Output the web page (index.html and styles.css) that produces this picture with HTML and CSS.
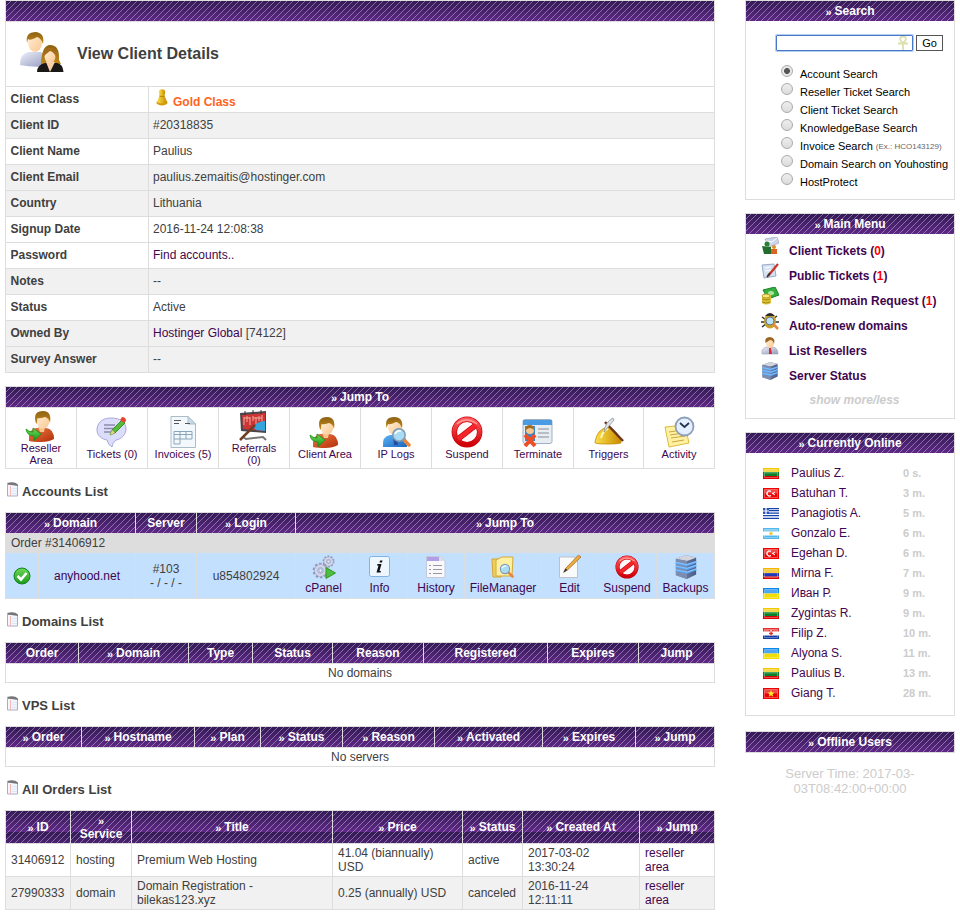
FILE: index.html
```html
<!DOCTYPE html>
<html lang="en">
<head>
<meta charset="utf-8">
<title>View Client Details</title>
<link rel="stylesheet" href="styles.css">
</head>
<body>
<svg class="sprite" width="0" height="0" aria-hidden="true">
  <defs>
    <linearGradient id="gOrange" x1="0" y1="0" x2="1" y2="1"><stop offset="0" stop-color="#ef7a45"/><stop offset="1" stop-color="#b22f08"/></linearGradient>
    <linearGradient id="gBlue" x1="0" y1="0" x2="1" y2="1"><stop offset="0" stop-color="#5fb4f5"/><stop offset="1" stop-color="#1766c0"/></linearGradient>
    <linearGradient id="gHair" x1="0" y1="0" x2="0" y2="1"><stop offset="0" stop-color="#8d6214"/><stop offset="1" stop-color="#c48a18"/></linearGradient>
    <linearGradient id="gSkin" x1="0" y1="0" x2="1" y2="1"><stop offset="0" stop-color="#fff0d8"/><stop offset="1" stop-color="#f9c791"/></linearGradient>
    <linearGradient id="gGreen" x1="0" y1="0" x2="0" y2="1"><stop offset="0" stop-color="#6fd858"/><stop offset="1" stop-color="#1a9a1c"/></linearGradient>
    <linearGradient id="gShirt" x1="0" y1="0" x2="1" y2="1"><stop offset="0" stop-color="#eef0fa"/><stop offset="1" stop-color="#9299bd"/></linearGradient>
    <linearGradient id="gGold" x1="0" y1="0" x2="1" y2="0"><stop offset="0" stop-color="#fbe14d"/><stop offset="1" stop-color="#c88a00"/></linearGradient>
    <linearGradient id="gRed" x1="0" y1="0" x2="0" y2="1"><stop offset="0" stop-color="#ff5a5a"/><stop offset="1" stop-color="#cf0007"/></linearGradient>
    <linearGradient id="gServer" x1="0" y1="0" x2="1" y2="0"><stop offset="0" stop-color="#8292b5"/><stop offset="1" stop-color="#4a5c85"/></linearGradient>
  </defs>
  <symbol id="person" viewBox="0 0 32 32">
    <path d="M4 31Q3 19 11 18L21 18Q29 19 29 29Q24 32 16 32Q8 32 4 31Z" fill="url(#gOrange)"/>
    <path d="M13 17h7l-1 5h-4Z" fill="#f7c58c"/>
    <ellipse cx="18" cy="11" rx="6.3" ry="7.800" fill="url(#gSkin)"/>
    <path d="M10.500 12Q8 1 18 1Q27 1 25 13Q24 8 20 7Q14 9 12.500 8Q12 10 12 14Z" fill="url(#gHair)"/>
  </symbol>
  <symbol id="person-arrow" viewBox="0 0 32 32">
    <use href="#person"/>
    <path d="M1 19Q4 22 8 22L8 18L16 24L9 30.500V26Q2 26 1 19Z" fill="url(#gGreen)" stroke="#169018" stroke-width=".8"/>
  </symbol>
  <symbol id="ban" viewBox="0 0 32 32">
    <circle cx="16" cy="16" r="12.700" fill="#fff8f8" stroke="#c8000a" stroke-width="5.400"/>
    <path d="M7 23L25 9" stroke="#c8000a" stroke-width="5.600"/>
    <circle cx="16" cy="16" r="12.700" fill="none" stroke="url(#gRed)" stroke-width="4.200"/>
    <path d="M7 23L25 9" stroke="#f5252b" stroke-width="4.400"/>
    <path d="M6 8Q15 0 26 8" fill="none" stroke="#ff9a9a" stroke-width="1.500"/>
  </symbol>
  <symbol id="server" viewBox="0 0 24 26">
    <path d="M1 4L12 0L23 3V21L13 26L1 22Z" fill="url(#gServer)"/>
    <path d="M1 4L12 0L23 3L13 6.500Z" fill="#d3d5dc"/>
    <path d="M1 4L13 6.500V26L1 22Z" fill="#7d8db0"/>
    <path d="M1 8.500L13 11L23 7.500M1 12.500L13 15L23 11.500M1 16.500L13 19L23 15.500" fill="none" stroke="#58a7fa" stroke-width="2.400"/>
    <path d="M1 8L13 10.500L23 7M1 12L13 14.500L23 11M1 16L13 18.500L23 15" fill="none" stroke="#a8d2ff" stroke-width=".7"/>
  </symbol>
  <symbol id="note" viewBox="0 0 11 15">
    <path d="M.5 2.500H10.500V14H.5Z" fill="#f2f6ff" stroke="#a9adc2"/>
    <path d="M0 1Q5-.5 9 1L11 3V4L1 2.500Z" fill="#777"/>
    <path d="M3.500 4V14" stroke="#f6b8b0"/><path d="M5 6.500H10M5 9H10M5 11.500H10" stroke="#dde5f6"/>
  </symbol>
  <symbol id="lens" viewBox="0 0 20 20">
    <path d="M12 12L18 18" stroke="#e8863a" stroke-width="3.500" stroke-linecap="round"/>
    <circle cx="8" cy="8" r="6.200" fill="#a9dcf4" stroke="#7d9cb5" stroke-width="1.500"/>
    <path d="M4 7Q6 3 10 4" fill="none" stroke="#fff" stroke-width="1.500"/>
  </symbol>
  <symbol id="gear" viewBox="0 0 20 20">
    <circle cx="10" cy="10" r="7.500" fill="none" stroke="#9397b8" stroke-width="3.500" stroke-dasharray="2.700 2"/>
    <circle cx="10" cy="10" r="5.200" fill="none" stroke="#a4a8c6" stroke-width="4.500"/>
    <circle cx="10" cy="10" r="5.200" fill="none" stroke="#d3d6e8" stroke-width="3"/>
    <circle cx="10" cy="10" r="2" fill="#edf3ff" stroke="#8388aa" stroke-width=".8"/>
  </symbol>
  <symbol id="shine" viewBox="0 0 16 11"><path d="M1.500 5.500V1.500H14.500V5.500Z" fill="#fff" opacity=".28"/><path d="M1.500 9.500V1.500H14.500V9.500Z" fill="none" stroke="#fff" opacity=".3"/></symbol>
  <symbol id="f-lt" viewBox="0 0 16 11"><path d="M0 0H16V4H0Z" fill="#f2c900"/><path d="M0 4H16V8H0Z" fill="#08812a"/><path d="M0 8H16V11H0Z" fill="#d80000"/><use href="#shine"/></symbol>
  <symbol id="f-tr" viewBox="0 0 16 11"><path d="M0 0H16V11H0Z" fill="#ee0000"/><use href="#shine"/><path d="M8 3.500A2.500 2.500 0 1 0 8 7.500" fill="none" stroke="#fff" stroke-width="1.300"/><path d="M9 5.500L12 4L10.500 5.500L12 7Z" fill="#fff" stroke="#fff" stroke-width=".6"/></symbol>
  <symbol id="f-gr" viewBox="0 0 16 11"><path d="M0 0H16V11H0Z" fill="#fff"/><path d="M0 .5H16M0 2.700H16M0 5.100H16M0 7.600H16M0 10.300H16" stroke="#1642ac" stroke-width="1.300"/><path d="M0 0H6V6H0Z" fill="#2852bc"/><path d="M3 0V6M0 3H6" stroke="#fff" stroke-width="1.200"/></symbol>
  <symbol id="f-ar" viewBox="0 0 16 11"><path d="M0 0H16V11H0Z" fill="#52b8ec"/><path d="M0 3.500H16V7.500H0Z" fill="#fff"/><use href="#shine"/><circle cx="8" cy="5.500" r="1.800" fill="#f2cd3c"/></symbol>
  <symbol id="f-co" viewBox="0 0 16 11"><path d="M0 0H16V5H0Z" fill="#f2b600"/><path d="M0 5H16V8.500H0Z" fill="#2036b4"/><path d="M0 8.500H16V11H0Z" fill="#d80000"/><use href="#shine"/></symbol>
  <symbol id="f-ua" viewBox="0 0 16 11"><path d="M0 0H16V5.500H0Z" fill="#0a86ea"/><path d="M0 5.500H16V11H0Z" fill="#f3dc00"/><use href="#shine"/></symbol>
  <symbol id="f-hr" viewBox="0 0 16 11"><path d="M0 0H16V11H0Z" fill="#fff"/><path d="M0 0H16V3.500H0Z" fill="#e82a2a"/><path d="M0 7.500H16V11H0Z" fill="#1840a4"/><use href="#shine"/><path d="M6 2H10V7L8 8L6 7Z" fill="#fff"/><path d="M6 2h1.400v1.400h1.400V2H10v1.400H8.800v1.400H10v1.400H8.800v1.500H7.400V6.200H6V4.800h1.400V3.400H6Z" fill="#e63030"/></symbol>
  <symbol id="f-vn" viewBox="0 0 16 11"><path d="M0 0H16V11H0Z" fill="#ec0000"/><use href="#shine"/><path d="M8 2L9 4.600H11.500L9.500 6.200L10.200 8.700L8 7.200L5.800 8.700L6.500 6.200L4.500 4.600H7Z" fill="#ffef2c"/></symbol>
</svg>

<div class="page">
  <main class="main">
    <section class="grid details">
      <div class="bar wide"></div>
      <div class="title wide">
        <svg width="44" height="42" viewBox="0 0 44 42">
          <path d="M0 33Q0 21 9 20H20Q28 21 28 34Q14 36 0 33Z" fill="url(#gShirt)"/>
          <ellipse cx="15" cy="11" rx="7" ry="9" fill="url(#gSkin)"/>
          <path d="M7 11Q5 0 16 0Q25 1 23 12Q21 6 17 5Q10 9 8 7Z" fill="url(#gHair)"/>
          <path d="M21 31Q22 13 30 13Q40 13 39 28L41 32L21 33Z" fill="url(#gHair)"/>
          <path d="M17 40Q17 33 25 31H37Q43 32 43.500 40Z" fill="#1a1717"/>
          <path d="M26 30H35L30 40Z" fill="#f8d2a6"/><ellipse cx="30" cy="24" rx="5.500" ry="7.500" fill="url(#gSkin)"/>
          <path d="M24 24Q24 16 30 16Q36 17 36 25Q34 20 30 19Q26 22 24 24Z" fill="#a56a17"/>
        </svg>
        <h1>View Client Details</h1>
      </div>
      <b>Client Class</b><div class="gold"><svg width="12" height="17" viewBox="0 0 12 17"><ellipse cx="6" cy="13.500" rx="5.500" ry="3" fill="#d19c08"/><path d="M4 5H8L11 13Q6 16 1 13Z" fill="url(#gGold)"/><circle cx="6" cy="3.500" r="3.200" fill="url(#gGold)"/><path d="M3.500 7Q6 8.500 8.500 7" stroke="#b88300" fill="none"/></svg><strong>Gold Class</strong></div>
      <b class="alt">Client ID</b><div class="alt">#20318835</div>
      <b>Client Name</b><div>Paulius</div>
      <b class="alt">Client Email</b><div class="alt">paulius.zemaitis@hostinger.com</div>
      <b class="alt">Country</b><div class="alt">Lithuania</div>
      <b>Signup Date</b><div>2016-11-24 12:08:38</div>
      <b>Password</b><div><a>Find accounts..</a></div>
      <b class="alt">Notes</b><div class="alt">--</div>
      <b>Status</b><div>Active</div>
      <b class="alt">Owned By</b><div class="alt"><a>Hostinger Global</a> [74122]</div>
      <b class="alt">Survey Answer</b><div class="alt">--</div>
    </section>

    <section class="grid jump">
      <div class="bar wide"><span>»</span> Jump To</div>
      <a><svg width="32" height="32"><use href="#person-arrow"/></svg>Reseller Area</a>
      <a><svg width="32" height="32" viewBox="0 0 32 32"><path d="M15 2C5 2 1 8 1 14C1 20 6 23 11 24Q12 29 16 31Q16 27 20 24C26 23 30 18 30 13C30 6 24 2 15 2Z" fill="#dcdcfb" stroke="#a9a8de"/><path d="M8 9H19M8 12.500H18M8 16H20" stroke="#8c8cab" stroke-width="1.500"/><path d="M14 19L16 14L26 4L29 7L19 17Z" fill="#57ba38" stroke="#268118" stroke-width=".8"/><path d="M24 4L26 1Q30 1 30 5L28 7Z" fill="#e84430"/><path d="M14 19L16 14L19 17Z" fill="#f1cd8c"/></svg>Tickets (0)</a>
      <a><svg width="32" height="32" viewBox="0 0 32 32"><path d="M4 .5H21L28.500 8V31.500H4Z" fill="#f2f8fc" stroke="#a8bdc8"/><path d="M21 .5V8H28.500Z" fill="#c8dce8" stroke="#a8bdc8"/><path d="M7 4.500H14M7 7.500H12M18 7.500H23" stroke="#555"/><path d="M7 15.500H25V23H7ZM7 18.500H25M13 15V28M19 15V23M7 23V28H13" fill="none" stroke="#8aa6bb"/></svg>Invoices (5)</a>
      <a><svg width="32" height="32" viewBox="0 0 32 32"><path d="M5 27L8 29L25 27L28 30" fill="none" stroke="#777" stroke-width="2"/><path d="M2 3L28 1V23L3 21Z" fill="#49474d"/><path d="M4 5L27 3V21L5 19Z" fill="#cc3533"/><path d="M6 7V15M9 6V12M12 7V15M15 6V11M18 7V14M21 6V11M24 5V12M6 8H12M15 8H24" stroke="#f0aaa0"/><path d="M15 17Q18 12 27 11V21L18 20Z" fill="#34a5dd"/><path d="M2 30L17 15" stroke="#713e24" stroke-width="2.500"/><path d="M7 1V5M15 0V4M23 0V4" stroke="#333"/></svg>Referrals (0)</a>
      <a><svg width="32" height="32"><use href="#person-arrow"/></svg>Client Area</a>
      <a><svg width="32" height="32" viewBox="0 0 32 32"><path d="M3 31Q2 20 10 19H21Q27 20 27 31Z" fill="url(#gBlue)"/><ellipse cx="14.500" cy="11" rx="6.500" ry="8" fill="url(#gSkin)"/><path d="M6.500 12Q4 1 14 1Q24 1 22 13Q20 6 16 6Q10 9 8 8Z" fill="url(#gHair)"/><path d="M13 20H17L18 29H14Z" fill="#2b4a9b"/><use href="#lens" x="11" y="11" width="20" height="20"/></svg>IP Logs</a>
      <a><svg width="32" height="32"><use href="#ban"/></svg>Suspend</a>
      <a><svg width="32" height="32" viewBox="0 0 32 32"><rect x="1" y="3.500" width="29" height="24" rx="2" fill="#e8edf2" stroke="#9eb1c5"/><path d="M1 4H30V9H1Z" fill="#499ce3"/><path d="M3 10H13V25H3Z" fill="#3d86c8"/><circle cx="8" cy="14" r="4" fill="#f8c78f"/><path d="M4 14Q3 9 8 9Q12 9 12 14Q8 10 4 14Z" fill="#a26c1e"/><path d="M16 13H27M16 17H27M16 21H27" stroke="#858e99"/><path d="M3 19L13 30M13 19L3 30" stroke="#ef4e26" stroke-width="4"/></svg>Terminate</a>
      <a><svg width="32" height="32" viewBox="0 0 32 32"><path d="M2 26Q4 13 15 11Q25 14 28 26Q30 28 15 28Q0 28 2 26Z" fill="url(#gGold)" stroke="#c58a00" stroke-width=".8"/><path d="M8 22Q10 14 15 13" stroke="#fff8b5" stroke-width="2" fill="none"/><path d="M12 6L30 25" stroke="#6d351d" stroke-width="2.500"/><path d="M11 16Q12 6 20 2L21 4L16 10Z" fill="#dce1e5" stroke="#858b91" stroke-width=".7"/></svg>Triggers</a>
      <a><svg width="32" height="32" viewBox="0 0 32 32"><path d="M2 11L22 9L26 27L6 31Z" fill="#fff0a2" stroke="#dbbd40"/><path d="M6 16L19 14M7 19L21 17M8 22L22 20M9 26L21 24" stroke="#c7a842"/><circle cx="21.500" cy="10.500" r="9" fill="#e4efff" stroke="#8d9fb8" stroke-width="1.800"/><path d="M17 7L21.500 11L26 7" fill="none" stroke="#25364e" stroke-width="1.800"/></svg>Activity</a>
    </section>

    <h2><svg width="11" height="15"><use href="#note"/></svg>Accounts List</h2>
    <section class="grid accounts">
      <div class="bar two"><span>»</span> Domain</div><div class="bar">Server</div><div class="bar"><span>»</span> Login</div><div class="bar seven"><span>»</span> Jump To</div>
      <div class="order wide">Order #31406912</div>
      <div><svg width="18" height="18" viewBox="0 0 18 18"><circle cx="9" cy="9" r="8" fill="url(#gGreen)" stroke="#118518"/><path d="M4.500 9L8 12.500L13.500 6" fill="none" stroke="#fff" stroke-width="2.600"/></svg></div>
      <div><a>anyhood.net</a></div>
      <div>#103<br>- / - / -</div>
      <div>u854802924</div>
      <a><svg width="24" height="24" viewBox="0 0 24 24"><use href="#gear" x="10" y="0" width="13" height="13"/><use href="#gear" x="0" y="7" width="17" height="17"/><path d="M14 12.500L23.500 18L14 23.500Z" fill="#51bd3e" stroke="#2b9a24"/></svg>cPanel</a>
      <a><svg width="24" height="24" viewBox="0 0 24 24"><rect x="1.500" y="1.500" width="20" height="20" rx="2" fill="#eef7ff" stroke="#80b3df"/><path d="M12 5.500H14.500L14 7.500H11.500ZM9.500 9H13.500L11.500 16H13L12.500 17.500H8.500L10.500 10.500H9Z" fill="#111"/></svg>Info</a>
      <a><svg width="24" height="24" viewBox="0 0 24 24"><path d="M2.500 1.500H16L21 6V22.500H2.500Z" fill="#f8f8fd" stroke="#c5c8d9"/><path d="M3 2H15V6H3Z" fill="#b29de9"/><path d="M15 1.500V6H21Z" fill="#ddd"/><path d="M5 10.500H7M9 10.500H18M5 14.500H7M9 14.500H18M5 18.500H7M9 18.500H18" stroke="#999"/></svg>History</a>
      <a><svg width="24" height="24" viewBox="0 0 24 24"><path d="M1 4H8L10 7V22H2Z" fill="#f0cf59" stroke="#d0a735"/><path d="M5 5L11 2H22L21 21H5Z" fill="#fff0a4" stroke="#d2aa3b"/><use href="#lens" x="8" y="8" width="15" height="15"/></svg>FileManager</a>
      <a><svg width="24" height="24" viewBox="0 0 24 24"><path d="M1.500 2H16L19.500 6V22.500H1.500Z" fill="#fafafa" stroke="#bdc1c7"/><path d="M6 17L7.500 13.500L20.500 0L23 2L9.500 15Z" fill="#efac3a" stroke="#995f21" stroke-width=".7"/><path d="M5 18L7.500 13.500L9.500 15Z" fill="#333"/></svg>Edit</a>
      <a><svg width="24" height="24"><use href="#ban"/></svg>Suspend</a>
      <a><svg width="24" height="24"><use href="#server"/></svg>Backups</a>
    </section>

    <h2><svg width="11" height="15"><use href="#note"/></svg>Domains List</h2>
    <section class="grid domains">
      <div class="bar">Order</div><div class="bar"><span>»</span> Domain</div><div class="bar">Type</div><div class="bar">Status</div><div class="bar">Reason</div><div class="bar">Registered</div><div class="bar">Expires</div><div class="bar">Jump</div>
      <div class="empty wide">No domains</div>
    </section>

    <h2><svg width="11" height="15"><use href="#note"/></svg>VPS List</h2>
    <section class="grid vps">
      <div class="bar"><span>»</span> Order</div><div class="bar"><span>»</span> Hostname</div><div class="bar"><span>»</span> Plan</div><div class="bar"><span>»</span> Status</div><div class="bar"><span>»</span> Reason</div><div class="bar"><span>»</span> Activated</div><div class="bar"><span>»</span> Expires</div><div class="bar"><span>»</span> Jump</div>
      <div class="empty wide">No servers</div>
    </section>

    <h2><svg width="11" height="15"><use href="#note"/></svg>All Orders List</h2>
    <section class="grid orders">
      <div class="bar"><span>»</span> ID</div><div class="bar stack"><span>»</span>Service</div><div class="bar"><span>»</span> Title</div><div class="bar"><span>»</span> Price</div><div class="bar"><span>»</span> Status</div><div class="bar"><span>»</span> Created At</div><div class="bar"><span>»</span> Jump</div>
      <div>31406912</div><div>hosting</div><div>Premium Web Hosting</div><div>41.04 (biannually)<br>USD</div><div>active</div><div>2017-03-02<br>13:30:24</div><div><a>reseller<br>area</a></div>
      <div class="alt">27990333</div><div class="alt">domain</div><div class="alt">Domain Registration -<br>bilekas123.xyz</div><div class="alt">0.25 (annually) USD</div><div class="alt">canceled</div><div class="alt">2016-11-24<br>12:11:11</div><div class="alt"><a>reseller<br>area</a></div>
    </section>
  </main>

  <aside class="side">
    <section class="box search">
      <div class="bar"><span>»</span> Search</div>
      <form>
        <div class="field"><svg width="12" height="14" viewBox="0 0 12 14"><path d="M6 7Q2 4 3.500 1.500Q6-.5 8.500 1.500Q10 4 6 7V14M1 7.500H11" fill="none" stroke="#dce0ac" stroke-width="1.800"/></svg></div>
        <button type="button">Go</button>
      </form>
      <ul>
        <li class="on"><i></i>Account Search</li>
        <li><i></i>Reseller Ticket Search</li>
        <li><i></i>Client Ticket Search</li>
        <li><i></i>KnowledgeBase Search</li>
        <li><i></i>Invoice Search <small>(Ex.: HCO143129)</small></li>
        <li><i></i>Domain Search on Youhosting</li>
        <li><i></i>HostProtect</li>
      </ul>
    </section>

    <section class="box menu">
      <div class="bar"><span>»</span> Main Menu</div>
      <ul>
        <li><svg width="18" height="18" viewBox="0 0 18 18"><path d="M4 2L16 0L18 6L8 10Z" fill="#cdd5ed" stroke="#929ab8" stroke-width=".6"/><path d="M5 4L11 5L16 1" fill="none" stroke="#fff"/><circle cx="6" cy="7" r="2.500" fill="#2b7c36"/><path d="M1 9L10 10V17H3Z" fill="#226d2c"/><circle cx="13" cy="10" r="2" fill="#db8f28"/><path d="M10 12H16V17H10Z" fill="#db6425"/></svg><a>Client Tickets (<em>0</em>)</a></li>
        <li><svg width="18" height="18" viewBox="0 0 18 18"><path d="M1 3L13 2L15 14L3 16Z" fill="#d5e2f3" stroke="#96abc5"/><path d="M4 6L10 5M4 9L10 8" stroke="#fff"/><path d="M7 14L17 2" stroke="#c73728" stroke-width="2.200"/><path d="M6 15L9 11" stroke="#333" stroke-width="1.500"/></svg><a>Public Tickets (<em>1</em>)</a></li>
        <li><svg width="18" height="18" viewBox="0 0 18 18"><path d="M2 3L14 0L18 8L7 12Z" fill="#37af3b" stroke="#16842c"/><ellipse cx="10" cy="6" rx="3" ry="2" fill="#a8e69e"/><path d="M1 8H10V16Q5 19 1 16Z" fill="#dac034"/><ellipse cx="5" cy="9" rx="4" ry="2" fill="#f5e782" stroke="#b99a1d"/><path d="M1 12Q5 14 9 12M1 15Q5 17 9 15" fill="none" stroke="#a88c20"/></svg><a>Sales/Domain Request (<em>1</em>)</a></li>
        <li><svg width="18" height="18" viewBox="0 0 18 18"><path d="M1 5L16 15M1 15L16 4M0 10H18" stroke="#303330" stroke-width="1.500"/><ellipse cx="9" cy="9" rx="6" ry="7.500" fill="#c9a029"/><path d="M4 4Q9-2 14 4Z" fill="#292b28"/><circle cx="9" cy="9" r="4" fill="#bbe3f5" stroke="#667684"/><path d="M12 12L17 17" stroke="#e58b3d" stroke-width="2.500"/></svg><a>Auto-renew domains</a></li>
        <li><svg width="18" height="18" viewBox="0 0 18 18"><path d="M1 17Q0 11 6 10H12Q17 11 17 17Z" fill="url(#gShirt)" stroke="#9da1af" stroke-width=".6"/><ellipse cx="9" cy="6" rx="4" ry="5" fill="url(#gSkin)"/><path d="M4.500 6Q3 0 9 0Q15 1 13 7Q12 3 9 3Q6 5 4.500 6Z" fill="#9b6523"/><path d="M8 11H10L11 17H8Z" fill="#d42f37"/></svg><a>List Resellers</a></li>
        <li><svg width="18" height="18"><use href="#server"/></svg><a>Server Status</a></li>
      </ul>
      <p>show more/less</p>
    </section>

    <section class="box online">
      <div class="bar"><span>»</span> Currently Online</div>
      <ul>
        <li><svg><use href="#f-lt"/></svg><a>Paulius Z.</a><b>0 s.</b></li>
        <li><svg><use href="#f-tr"/></svg><a>Batuhan T.</a><b>3 m.</b></li>
        <li><svg><use href="#f-gr"/></svg><a>Panagiotis A.</a><b>5 m.</b></li>
        <li><svg><use href="#f-ar"/></svg><a>Gonzalo E.</a><b>6 m.</b></li>
        <li><svg><use href="#f-tr"/></svg><a>Egehan D.</a><b>6 m.</b></li>
        <li><svg><use href="#f-co"/></svg><a>Mirna F.</a><b>7 m.</b></li>
        <li><svg><use href="#f-ua"/></svg><a>Иван Р.</a><b>9 m.</b></li>
        <li><svg><use href="#f-lt"/></svg><a>Zygintas R.</a><b>9 m.</b></li>
        <li><svg><use href="#f-hr"/></svg><a>Filip Z.</a><b>10 m.</b></li>
        <li><svg><use href="#f-ua"/></svg><a>Alyona S.</a><b>11 m.</b></li>
        <li><svg><use href="#f-lt"/></svg><a>Paulius B.</a><b>13 m.</b></li>
        <li><svg><use href="#f-vn"/></svg><a>Giang T.</a><b>28 m.</b></li>
      </ul>
    </section>

    <section class="box offline"><div class="bar"><span>»</span> Offline Users</div></section>
    <p class="time">Server Time: 2017-03-<br>03T08:42:00+00:00</p>
  </aside>
</div>
</body>
</html>
```

FILE: styles.css
```css
* { box-sizing: border-box; }
body { margin: 0; background: #fff; color: #404040; font: 12px/14px "Liberation Sans", Arial, sans-serif; }
h1, h2, p, ul { margin: 0; padding: 0; }
ul { list-style: none; }
a { color: #3f0650; }
.sprite { display: block; }
.page { display: flex; gap: 30px; padding-left: 5px; height: 912px; overflow: hidden; }
.main { width: 710px; flex: none; }
.side { width: 210px; flex: none; }

.bar {
  height: 20px;
  display: flex; align-items: center; justify-content: center; gap: 3px;
  color: #fff; font-weight: bold; text-align: center;
  background:
    repeating-linear-gradient(135deg, rgba(255,255,255,0) 0 3.3px, rgba(255,255,255,.36) 3.3px 4.24px),
    linear-gradient(#341a57, #5f2987) 0 0 / 100% 21px;
}
.bar span { font-size: 11px; line-height: 12px; padding-top: 1px; }

.grid { display: grid; gap: 1px; background: #ddd; border: 1px solid #ddd; }
.grid > * { background-color: #fff; }
.grid > .alt { background-color: #f1f1f1; }
.wide { grid-column: 1 / -1; }

.details { grid-template-columns: 142px 1fr; grid-template-rows: 20px 64px repeat(11, 25px); }
.details > b, .details > div { padding: 5px 4px 0; }
.details > b { padding-left: 4.5px; }
.details > .title { display: flex; align-items: center; gap: 13px; padding: 0 0 0 14px; }
.title svg { margin-top: -2px; }
h1 { font-size: 16px; line-height: 20px; }
.details > .gold { display: flex; gap: 5px; padding: 2px 0 0 7px; color: #ff641c; }
.gold strong { padding-top: 6px; }

.jump { margin-top: 13px; grid-template-columns: repeat(8, 70px) 69px 70px; grid-template-rows: 20px 60px; }
.jump > a { display: flex; flex-direction: column; align-items: center; justify-content: center; font-size: 11px; line-height: 12px; text-align: center; padding: 0 8px; white-space: nowrap; }
.jump > a:nth-child(2), .jump > a:nth-child(5) { white-space: normal; padding: 0 12px; }

h2 { display: flex; gap: 4px; margin: 13px 0 13px 2px; height: 17px; font-size: 13px; line-height: 20px; }

.accounts { grid-template-columns: 32px 96px 60px 98px 55px 55px 56px 76px 55px 58px 57px; grid-template-rows: 20px 18px 45px; }
.two { grid-column: span 2; }
.seven { grid-column: span 7; }
.accounts > :not(.bar):not(.order) { background: #c4e0ff; display: flex; flex-direction: column; align-items: center; justify-content: center; text-align: center; }
.accounts > a > svg { margin: -1px 0 2px; }
.accounts > .order { background: #ddd; padding: 2px 5px; }

.empty { text-align: center; line-height: 18px; }
.domains, .vps { grid-template-rows: 20px 18px; }
.domains { grid-template-columns: 72px 109px 63px 79px 90px 123px 90px 1fr; }
.vps { grid-template-columns: 75px 112px 65px 81px 91px 107px 92px 1fr; }
.orders { grid-template-columns: 64px 60px 200px 129px 59px 116px 1fr; grid-template-rows: repeat(3, 32px); }
.orders > .bar { height: 32px; }
.orders > .stack { flex-direction: column; gap: 0; line-height: 14px; padding-top: 1px; }
.orders > :not(.bar) { display: flex; align-items: center; padding-left: 5px; }

.box { border: 1px solid #ddd; }
.search { height: 200px; }
.search form { display: flex; gap: 3px; padding: 14px 0 0 30px; }
.field { width: 137px; height: 16px; border: 1px solid #4878c8; border-radius: 1px; box-shadow: 0 0 0 1px #b4cdf2; display: flex; justify-content: flex-end; align-items: center; padding-right: 3px; }
.search button { width: 27px; height: 16px; padding: 0; border: 1px solid #555; background: #fff; font: 11px/12px "Liberation Sans", Arial, sans-serif; color: #000; }
.search ul { padding: 13px 0 0 35px; color: #000; font-size: 11px; }
.search li { display: flex; height: 18px; gap: 7px; line-height: 20px; white-space: nowrap; }
.search small { font-size: 8px; color: #666; margin-left: -4px; line-height: 21px; }
.search i { width: 12px; height: 12px; margin-top: 1px; border: 1px solid #aaa; border-radius: 50%; background: linear-gradient(#eee, #dcdcdc); }
.search .on i { background: radial-gradient(circle, #555 0 2.6px, #e8e8e8 3.3px); }

.menu { height: 206px; margin-top: 13px; }
.menu ul { padding: 3px 0 0 15px; }
.menu li { display: flex; gap: 10px; height: 25px; }
.menu a { font-weight: bold; line-height: 28px; white-space: nowrap; }
.menu em { color: #f00; font-style: normal; }
.menu p { margin-top: 6px; text-align: center; font-weight: bold; font-style: italic; color: #ccc; padding-left: 9px; }

.online { height: 284px; margin-top: 13px; }
.online ul { padding: 10px 0 0 17px; }
.online li { display: grid; grid-template-columns: 28px 112px 1fr; height: 20px; line-height: 20px; align-items: center; }
.online svg { width: 16px; height: 11px; display: block; }
.online b { font-size: 11px; color: #ccc; }

.offline { margin-top: 15px; }
.time { margin-top: 13px; text-align: center; font-size: 13px; line-height: 15px; color: #ccc; }
```
